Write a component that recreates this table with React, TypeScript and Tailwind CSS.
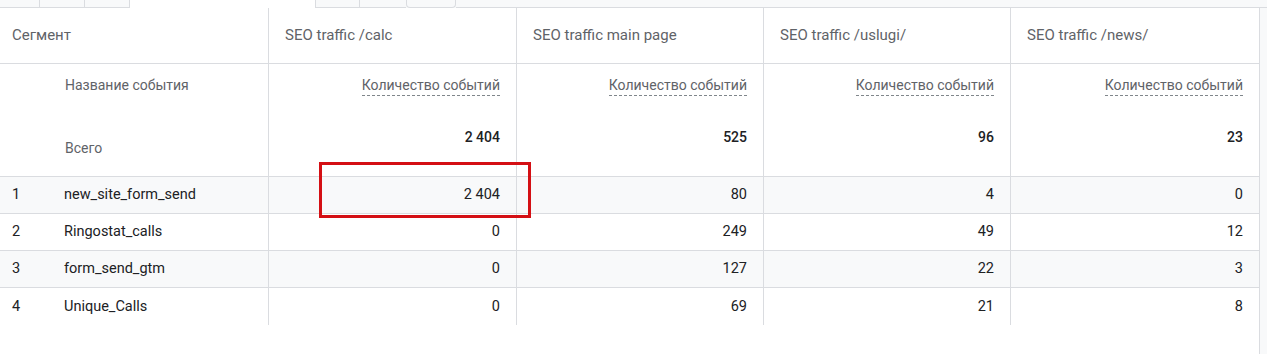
import React from 'react';

const columns = ['SEO traffic /calc', 'SEO traffic main page', 'SEO traffic /uslugi/', 'SEO traffic /news/'];
const totals = ['2 404', '525', '96', '23'];

const rows = [
  { name: 'new_site_form_send', values: ['2 404', '80', '4', '0'] },
  { name: 'Ringostat_calls', values: ['0', '249', '49', '12'] },
  { name: 'form_send_gtm', values: ['0', '127', '22', '3'] },
  { name: 'Unique_Calls', values: ['0', '69', '21', '8'] },
];

const grid = 'grid grid-cols-[269px_248px_247px_247px_248px]';

export default function App() {
  return (
    <div
      className="relative w-[1267px] h-[354px] bg-[#f8f9fa] flex flex-col overflow-hidden text-[14px]"
      style={{ fontFamily: 'Roboto, "Noto Sans", Arial, sans-serif' }}
    >
      {/* tab strip */}
      <div className="flex h-[8px] shrink-0">
        <div className="w-[40px] border-r border-b border-[#dadce0] bg-[#f8f9fa]" />
        <div className="w-[45px] border-r border-b border-[#dadce0] bg-[#f8f9fa]" />
        <div className="w-[45px] border-r border-b border-[#dadce0] bg-[#f8f9fa]" />
        <div className="w-[186px] border-r border-[#dadce0] bg-white" />
        <div className="w-[44px] border-r border-b border-[#dadce0] bg-[#f8f9fa]" />
        <div className="w-[46px] border-b border-[#dadce0] bg-[#f8f9fa]" />
        <div className="w-[50px] border-x border-b border-[#dadce0] rounded-b-[4px] bg-[#f8f9fa]" />
        <div className="flex-1 border-b border-[#dadce0] bg-[#f8f9fa]" />
      </div>

      <div className="flex flex-1">
        <div className="w-[1260px] bg-white border-r border-[#dadce0]">
          {/* header */}
          <div className={`${grid} h-[56px] border-b border-[#dadce0] text-[#5f6368] text-[15px]`}>
            <div className="flex items-center pl-3 border-r border-[#dadce0]">Сегмент</div>
            {columns.map((c, i) => (
              <div key={c} className={`flex items-center pl-4 ${i < 3 ? 'border-r border-[#dadce0]' : ''}`}>
                {c}
              </div>
            ))}
          </div>

          {/* sub header + totals */}
          <div className={`${grid} h-[113px] border-b border-[#dadce0]`}>
            <div className="flex flex-col pl-[65px] pt-[11px] border-r border-[#dadce0] text-[#5f6368]">
              <span className="leading-5">Название события</span>
              <span className="leading-5 mt-[43px]">Всего</span>
            </div>
            {totals.map((t, i) => (
              <div
                key={i}
                className={`flex flex-col items-end pr-4 pt-[11px] ${i < 3 ? 'border-r border-[#dadce0]' : ''}`}
              >
                <span className="leading-5 text-[#5f6368] border-b border-dashed border-[#80868b]">
                  Количество событий
                </span>
                <span className="leading-5 mt-[31px] font-medium text-[#202124]">{t}</span>
              </div>
            ))}
          </div>

          {/* rows */}
          {rows.map((r, idx) => (
            <div
              key={r.name}
              className={`${grid} h-[37px] text-[#202124] text-[14.5px] ${idx % 2 === 0 ? 'bg-[#f8f9fa]' : 'bg-white'} ${
                idx < rows.length - 1 ? 'border-b border-[#dadce0]' : ''
              }`}
            >
              <div className="flex items-center border-r border-[#dadce0]">
                <span className="w-[64px] pl-3">{idx + 1}</span>
                <span>{r.name}</span>
              </div>
              {r.values.map((v, i) => (
                <div
                  key={i}
                  className={`flex items-center justify-end pr-4 ${i < 3 ? 'border-r border-[#dadce0]' : ''}`}
                >
                  {v}
                </div>
              ))}
            </div>
          ))}
        </div>
      </div>

      {/* red highlight annotation */}
      <div className="absolute left-[319px] top-[162px] w-[212px] h-[56px] border-[3px] border-[#d40f14]" />
    </div>
  );
}
